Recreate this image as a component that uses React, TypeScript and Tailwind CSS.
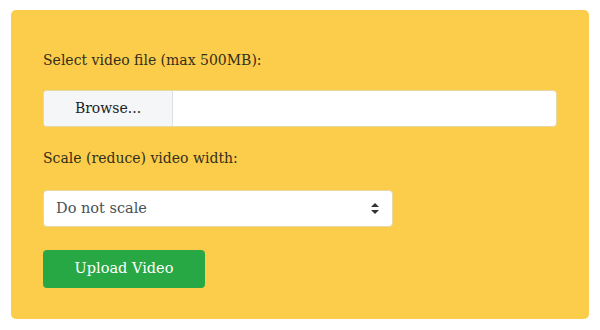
import React from 'react'

const serif = { fontFamily: '"DejaVu Serif", "Liberation Serif", serif' }

const App = () => {
  return (
    <div className='w-[600px] h-[330px] bg-white pt-[10px] px-[11px]' style={serif}>
      <div className='rounded-[5px] bg-[#fccd4a] px-[32px] pt-[38px] pb-[31px] flex flex-col'>
        <label className='text-[14px] leading-[24px] text-[#342e1c]'>Select video file (max 500MB):</label>

        <div className='mt-[18px] flex h-[37px] w-[514px] rounded-[4px] bg-white border border-[#e6d9a8] overflow-hidden'>
          <div className='w-[129px] bg-[#f5f6f8] border-r border-[#dcdfe3] flex items-center justify-center text-[14px] text-[#222]'>
            Browse...
          </div>
          <div className='flex-1' />
        </div>

        <label className='mt-[19px] text-[14px] leading-[24px] text-[#342e1c]'>Scale (reduce) video width:</label>

        <div className='mt-[20px] flex items-center justify-between h-[37px] w-[350px] rounded-[4px] bg-white border border-[#e6d9a8] pl-[12px] pr-[13px]'>
          <span className='text-[14.5px] text-[#495057]'>Do not scale</span>
          <svg width='8' height='11' viewBox='0 0 8 11'>
            <path d='M4 0 L8 4 L0 4 Z' fill='#333' />
            <path d='M4 11 L8 7 L0 7 Z' fill='#333' />
          </svg>
        </div>

        <button className='mt-[23px] w-[162px] h-[38px] rounded-[4px] bg-[#28a745] text-white text-[14.5px]'>
          Upload Video
        </button>
      </div>
    </div>
  )
}

export default App
